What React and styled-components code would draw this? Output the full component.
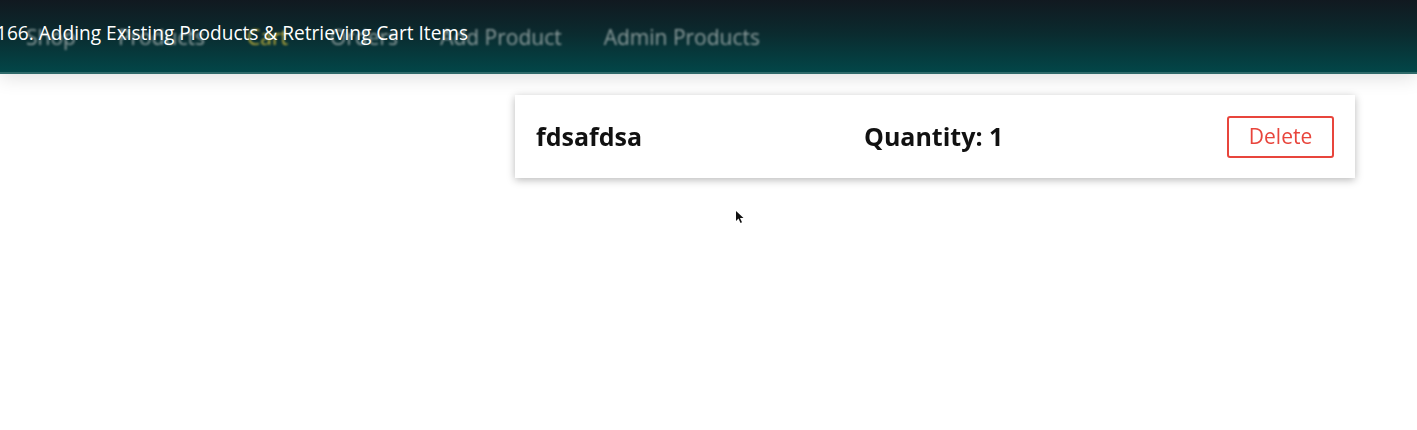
import styled, { createGlobalStyle } from 'styled-components';

const GlobalStyle = createGlobalStyle`
  html, body {
    margin: 0;
    padding: 0;
    background: #ffffff;
    font-family: 'Open Sans', sans-serif;
  }
`;

const Page = styled.div`
  position: relative;
  width: 1417px;
  height: 430px;
  overflow: hidden;
  background: #ffffff;
`;

const Header = styled.header`
  height: 72px;
  background: linear-gradient(to bottom, #111920 0%, #0b2a2e 45%, #024648 100%);
  border-bottom: 2px solid #2f6a6a;
  box-shadow: 0 4px 18px rgba(0, 0, 0, 0.12);
  display: flex;
  align-items: center;
  padding-left: 26px;
`;

const NavList = styled.nav`
  display: flex;
  align-items: center;
  gap: 42px;
  filter: blur(0.9px);
`;

const NavLink = styled.a`
  font-family: 'Open Sans', sans-serif;
  font-size: 21px;
  color: ${(p) => (p.$active ? '#b9ab3a' : '#8c9c9c')};
  text-decoration: none;
  padding-top: 1px;
`;

const VideoTitle = styled.div`
  position: absolute;
  top: 20px;
  left: -4px;
  font-family: 'Open Sans', sans-serif;
  font-size: 19.1px;
  color: #ffffff;
  white-space: nowrap;
`;

const Main = styled.main`
  padding: 21px 62px 0 515px;
`;

const CartList = styled.ul`
  list-style: none;
  margin: 0;
  padding: 0;
`;

const CartItem = styled.li`
  display: grid;
  grid-template-columns: 328px 1fr auto;
  align-items: center;
  height: 83px;
  padding: 0 21px;
  box-shadow: 0 2px 8px rgba(0, 0, 0, 0.28);
  background: #ffffff;
  filter: blur(0.4px);
`;

const ItemTitle = styled.h1`
  margin: 0 0 2px;
  font-family: 'Open Sans', sans-serif;
  font-weight: 700;
  font-size: 25px;
  color: #111111;
`;

const Quantity = styled.h2`
  margin: 0 0 2px;
  font-family: 'Open Sans', sans-serif;
  font-weight: 700;
  font-size: 25px;
  color: #111111;
`;

const DeleteButton = styled.button`
  width: 107px;
  height: 42px;
  background: #ffffff;
  border: 2px solid #e8453c;
  border-radius: 3px;
  color: #e8453c;
  font-family: 'Open Sans', sans-serif;
  font-size: 21px;
  padding: 0 0 2px;
  cursor: pointer;
`;

const Cursor = styled.svg`
  position: absolute;
  left: 736px;
  top: 211px;
  filter: blur(0.6px);
`;

const navItems = ['Shop', 'Products', 'Cart', 'Orders', 'Add Product', 'Admin Products'];

const App = () => {
  return (
    <Page>
      <GlobalStyle />
      <Header>
        <NavList>
          {navItems.map((item) => (
            <NavLink key={item} href="#" $active={item === 'Cart'}>
              {item}
            </NavLink>
          ))}
        </NavList>
      </Header>
      <VideoTitle>166. Adding Existing Products &amp; Retrieving Cart Items</VideoTitle>
      <Main>
        <CartList>
          <CartItem>
            <ItemTitle>fdsafdsa</ItemTitle>
            <Quantity>Quantity: 1</Quantity>
            <DeleteButton>Delete</DeleteButton>
          </CartItem>
        </CartList>
      </Main>
      <Cursor width="8" height="13" viewBox="0 0 8 13">
        <path d="M0 0 L0 10 L2.5 7.5 L4.5 12 L6 11.3 L4 7 L7.5 7 Z" fill="#111" />
      </Cursor>
    </Page>
  );
};

export default App;
